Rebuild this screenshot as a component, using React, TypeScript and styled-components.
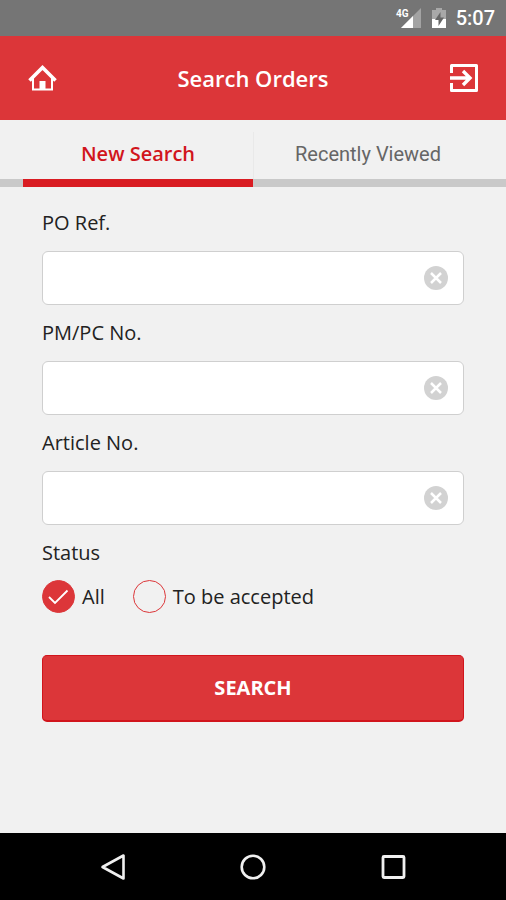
import React, { useState } from "react";
import styled, { createGlobalStyle } from "styled-components";

const RED = "#dc3639";
const DEEP_RED = "#d1151c";

const GlobalStyle = createGlobalStyle`
  *, *::before, *::after { box-sizing: border-box; }
  body { margin: 0; background: #f1f1f1; }
  button, input { font: inherit; }
`;

const Screen = styled.div`
  display: flex;
  flex-direction: column;
  min-height: 100vh;
  background: #f1f1f1;
  color: #222;
  font: 400 20px/28px "Open Sans", "Noto Sans", sans-serif;
`;

const StatusBar = styled.div`
  display: flex;
  align-items: center;
  justify-content: flex-end;
  height: 36px;
  padding-right: 11px;
  background: #757575;
  color: #fff;
`;

const SignalIcon = styled.svg`
  margin-right: 10px;
`;

const Clock = styled.time`
  margin-left: 9px;
  font: 500 20px/36px Roboto, sans-serif;
`;

const Header = styled.header`
  display: grid;
  grid-template-columns: 40px 1fr 40px;
  align-items: center;
  height: 84px;
  padding: 0 22px;
  background: ${RED};
  color: #fff;
`;

const Title = styled.h1`
  margin: 0;
  text-align: center;
  font-size: 22px;
  font-weight: 600;
  line-height: 30px;
`;

const IconButton = styled.button`
  display: flex;
  align-items: center;
  justify-content: center;
  width: 40px;
  height: 40px;
  padding: 0;
  border: 0;
  background: none;
  color: inherit;
  cursor: pointer;
`;

const Tabs = styled.div`
  display: grid;
  grid-template-columns: 1fr 1fr;
  height: 67px;
  padding: 0 23px;
  background:
    linear-gradient(#c9c9c9, #c9c9c9) bottom / 100% 8px no-repeat,
    linear-gradient(#e9e9e9, #e9e9e9) 50% 12px / 1px 100% no-repeat;
`;

const Tab = styled.button<{ $active: boolean }>`
  padding: 8px 0 0;
  border: 0;
  border-bottom: 8px solid ${(p) => (p.$active ? "#d91c22" : "#c9c9c9")};
  background: none;
  color: ${(p) => (p.$active ? DEEP_RED : "#666")};
  font-family: ${(p) => (p.$active ? '"Open Sans", sans-serif' : "Roboto, sans-serif")};
  font-weight: ${(p) => (p.$active ? 600 : 400)};
  cursor: pointer;
`;

const Form = styled.form`
  display: flex;
  flex: 1;
  flex-direction: column;
  padding: 22px 42px 48px;
`;

const Field = styled.div`
  display: flex;
  flex-direction: column;
  gap: 14px;
  margin-bottom: 14px;
`;

const InputBox = styled.div`
  display: flex;
  align-items: center;
  height: 54px;
  padding-right: 14px;
  border: 1px solid #cfcfcf;
  border-radius: 6px;
  background: #fff;
`;

const TextInput = styled.input`
  flex: 1;
  min-width: 0;
  height: 100%;
  padding: 0 14px;
  border: 0;
  outline: 0;
  background: none;
`;

const ClearButton = styled.button`
  display: flex;
  padding: 0;
  border: 0;
  background: none;
  cursor: pointer;
`;

const StatusGroup = styled.fieldset`
  min-width: 0;
  margin: 0 0 42px;
  padding: 0;
  border: 0;
`;

const Legend = styled.legend`
  margin-bottom: 13px;
  padding: 0;
`;

const Options = styled.div`
  display: flex;
  gap: 28px;
`;

const Option = styled.label`
  display: flex;
  align-items: center;
  gap: 7px;
  cursor: pointer;
`;

const CHECK = encodeURIComponent(
  '<svg xmlns="http://www.w3.org/2000/svg" viewBox="0 0 33 33"><path d="M7 17l6 6L25.500 10.500" fill="none" stroke="#fff" stroke-width="1.800"/></svg>'
);

const Radio = styled.input`
  appearance: none;
  width: 33px;
  height: 33px;
  margin: 0;
  border: 1px solid ${RED};
  border-radius: 50%;
  cursor: pointer;

  &:checked {
    background: ${RED} url("data:image/svg+xml,${CHECK}") center / 33px 33px;
  }
`;

const SearchButton = styled.button`
  height: 67px;
  border: 1px solid ${DEEP_RED};
  border-bottom-width: 2px;
  border-radius: 5px;
  background: ${RED};
  color: #fff;
  font-weight: 700;
  cursor: pointer;
`;

const NavBar = styled.nav`
  display: flex;
  align-items: center;
  justify-content: center;
  gap: 100px;
  height: 67px;
  background: #000;
  color: #f0f0f0;
`;

type SearchFieldProps = { id: string; label: string };

function SearchField({ id, label }: SearchFieldProps) {
  const [value, setValue] = useState("");
  return (
    <Field>
      <label htmlFor={id}>{label}</label>
      <InputBox>
        <TextInput id={id} value={value} onChange={(e) => setValue(e.target.value)} />
        <ClearButton type="button" aria-label={`Clear ${label}`} onClick={() => setValue("")}>
          <svg width="26" height="26" viewBox="0 0 26 26">
            <circle cx="13" cy="13" r="12" fill="#d2d2d2" />
            <path d="M8 8l10 10M18 8l-10 10" stroke="#fff" strokeWidth="2.500" />
          </svg>
        </ClearButton>
      </InputBox>
    </Field>
  );
}

export default function App() {
  const [tab, setTab] = useState("new");
  const [status, setStatus] = useState("all");

  return (
    <Screen>
      <GlobalStyle />
      <StatusBar>
        <SignalIcon width="26" height="24" viewBox="0 0 26 24" aria-label="4G signal">
          <path d="M26 2v20H6z" fill="#a3a3a3" />
          <path d="M18 10v12H6z" fill="#fff" />
          <text x="1" y="11" fill="#fff" fontFamily="Roboto, sans-serif" fontWeight="700" fontSize="10">
            4G
          </text>
        </SignalIcon>
        <svg width="16" height="22" viewBox="0 0 16 22" aria-label="Battery charging">
          <path d="M5 1h6v2h4v18H1V3h4z" fill="#a8a8a8" />
          <path d="M1 12h14v9H1z" fill="#fff" />
          <path d="M9.500 5L4 13h3.500v6L13 10.500H9.500z" fill="#666" />
        </svg>
        <Clock>5:07</Clock>
      </StatusBar>

      <Header>
        <IconButton type="button" aria-label="Home">
          <svg width="30" height="28" viewBox="0 0 30 28">
            <path d="M6 14v11.500h19V14" fill="none" stroke="#fff" strokeWidth="2" />
            <path d="M2.500 16.500L15.500 3.500L28.500 16.500" fill="none" stroke="#fff" strokeWidth="3.600" />
            <path d="M12.500 17h6v9h-6z" fill="#fff" />
          </svg>
        </IconButton>
        <Title>Search Orders</Title>
        <IconButton type="button" aria-label="Log out">
          <svg width="30" height="30" viewBox="0 0 30 30" fill="none" stroke="#fff" strokeWidth="3">
            <path d="M2.500 10V2.500h25v25h-25V20" strokeLinejoin="round" />
            <path d="M1 15h20M14 8l7 7l-7 7" strokeWidth="3.400" />
          </svg>
        </IconButton>
      </Header>

      <Tabs role="tablist">
        <Tab type="button" role="tab" aria-selected={tab === "new"} $active={tab === "new"} onClick={() => setTab("new")}>
          New Search
        </Tab>
        <Tab
          type="button"
          role="tab"
          aria-selected={tab === "recent"}
          $active={tab === "recent"}
          onClick={() => setTab("recent")}
        >
          Recently Viewed
        </Tab>
      </Tabs>

      <Form onSubmit={(e) => e.preventDefault()}>
        <SearchField id="po-ref" label="PO Ref." />
        <SearchField id="pm-pc-no" label="PM/PC No." />
        <SearchField id="article-no" label="Article No." />
        <StatusGroup>
          <Legend>Status</Legend>
          <Options>
            <Option>
              <Radio type="radio" name="status" checked={status === "all"} onChange={() => setStatus("all")} />
              All
            </Option>
            <Option>
              <Radio type="radio" name="status" checked={status === "pending"} onChange={() => setStatus("pending")} />
              To be accepted
            </Option>
          </Options>
        </StatusGroup>
        <SearchButton type="submit">SEARCH</SearchButton>
      </Form>

      <NavBar aria-label="System">
        <IconButton type="button" aria-label="Back">
          <svg width="28" height="28" viewBox="0 0 28 28" fill="none" stroke="currentColor" strokeWidth="2.600">
            <path d="M24.500 2.500v23L3.500 14z" strokeLinejoin="round" />
          </svg>
        </IconButton>
        <IconButton type="button" aria-label="Home screen">
          <svg width="28" height="28" viewBox="0 0 28 28" fill="none" stroke="currentColor" strokeWidth="2.600">
            <circle cx="14" cy="14" r="11.300" />
          </svg>
        </IconButton>
        <IconButton type="button" aria-label="Recent apps">
          <svg width="28" height="28" viewBox="0 0 28 28" fill="none" stroke="currentColor" strokeWidth="2.800">
            <rect x="4" y="3.500" width="21" height="21" rx="1" />
          </svg>
        </IconButton>
      </NavBar>
    </Screen>
  );
}
